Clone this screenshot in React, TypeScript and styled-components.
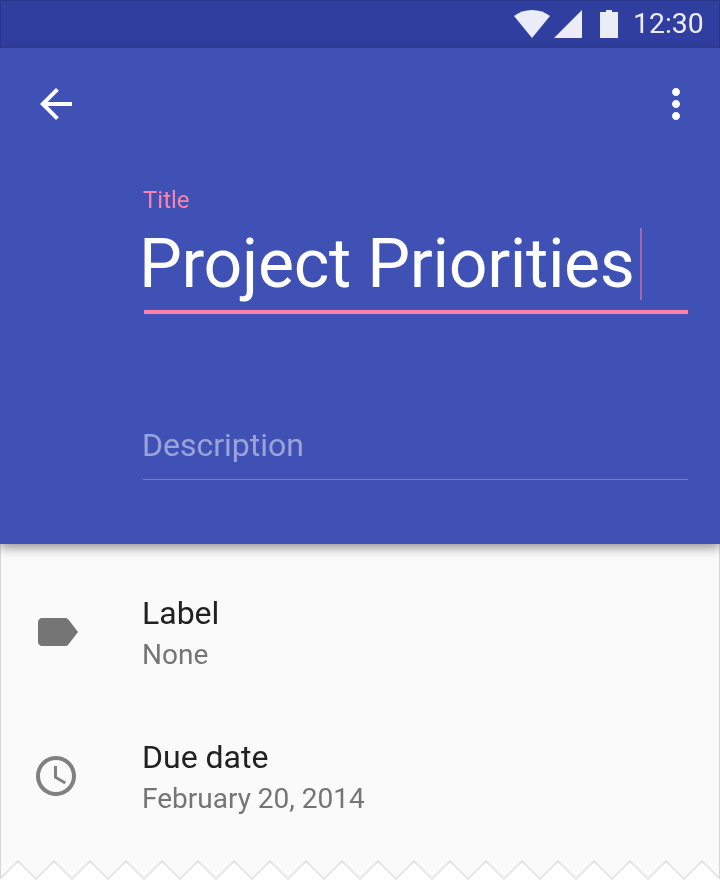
import styled, { createGlobalStyle } from 'styled-components';

const GlobalStyle = createGlobalStyle`
  html, body {
    margin: 0;
    padding: 0;
    background: #ffffff;
    font-family: Roboto, "Liberation Sans", sans-serif;
  }
`;

const Screen = styled.main`
  position: relative;
  width: 720px;
  height: 880px;
  overflow: hidden;
  background: #fafafa;
  display: flex;
  flex-direction: column;
  &::after {
    content: '';
    position: absolute;
    inset: 0;
    border: solid rgba(0, 0, 0, 0.14);
    border-width: 1px 1px 0 1px;
    pointer-events: none;
  }
`;

const StatusBar = styled.div`
  height: 48px;
  flex: none;
  background: #303f9f;
  color: rgba(255, 255, 255, 0.9);
  display: flex;
  align-items: center;
  justify-content: flex-end;
  padding-right: 16px;
`;

const StatusIcons = styled.div`
  display: flex;
  align-items: center;
  margin-right: 15px;
`;

const Clock = styled.span`
  font-size: 28.4px;
  line-height: 48px;
  will-change: transform;
`;

const Header = styled.header`
  position: relative;
  z-index: 1;
  flex: none;
  height: 496px;
  background: #3f51b5;
  box-shadow: 0 4px 10px rgba(0, 0, 0, 0.4);
  display: flex;
  flex-direction: column;
`;

const Toolbar = styled.div`
  height: 112px;
  padding: 0 20px 0 32px;
  display: flex;
  align-items: center;
  justify-content: space-between;
`;

const ToolIcon = styled.svg`
  width: 48px;
  height: 48px;
  fill: #ffffff;
  display: block;
`;

const Fields = styled.div`
  padding: 0 32px 0 143px;
  display: flex;
  flex-direction: column;
`;

const FloatLabel = styled.label`
  font-size: 24px;
  line-height: 32px;
  height: 32px;
  margin-top: 24px;
  color: #ff80ab;
  will-change: transform;
`;

const TitleRow = styled.div`
  height: 78px;
  margin: 9px 0 0 -4px;
  display: flex;
  align-items: center;
  gap: 5px;
`;

const TitleText = styled.span`
  font-size: 68px;
  line-height: 78px;
  letter-spacing: -0.35px;
  color: #ffffff;
  white-space: nowrap;
  will-change: transform;
`;

const Cursor = styled.i`
  display: block;
  width: 2px;
  height: 72px;
  background: #ff80ab;
  opacity: 0.5;
`;

const TitleLine = styled.div`
  height: 4px;
  margin: 7px 0 0 1px;
  background: #ff80ab;
`;

const Description = styled.div`
  margin-top: 111px;
  height: 54px;
  line-height: 40px;
  font-size: 32px;
  text-indent: -1px;
  color: rgba(255, 255, 255, 0.47);
  border-bottom: 1px solid rgba(255, 255, 255, 0.25);
  will-change: transform;
`;

const List = styled.section`
  flex: 1;
  display: flex;
  flex-direction: column;
  padding-top: 16px;
`;

const Row = styled.div`
  height: 144px;
  padding-left: 32px;
  display: flex;
  align-items: center;
  gap: 62px;
`;

const RowIcon = styled.svg<{ $tone?: string }>`
  width: 48px;
  height: 48px;
  flex: none;
  fill: ${(p) => p.$tone ?? '#757575'};
  display: block;
`;

const RowText = styled.div`
  display: flex;
  flex-direction: column;
  padding-top: 4px;
  will-change: transform;
`;

const Primary = styled.span`
  font-size: 32px;
  line-height: 42px;
  color: #212121;
`;

const Secondary = styled.span`
  font-size: 28px;
  line-height: 42px;
  color: #757575;
`;

const TornEdge = styled.svg`
  position: absolute;
  left: 0;
  bottom: 0;
  width: 720px;
  height: 20px;
  display: block;
  z-index: 2;
`;

const zigzag = Array.from({ length: 21 }, (_, i) => `${i * 36},19 ${i * 36 + 18},1`).join(' ');

export default function App() {
  return (
    <>
      <GlobalStyle />
      <Screen>
        <StatusBar>
          <StatusIcons>
            <svg width="36" height="28" viewBox="0 0 36 28" fill="currentColor">
              <path d="M18 28 0 6C5 2 11 0 18 0s13 2 18 6z" />
            </svg>
            <svg width="28" height="28" viewBox="0 0 28 28" fill="currentColor" style={{ marginLeft: 4 }}>
              <path d="M0 28 28 0v28z" />
            </svg>
            <svg width="18" height="28" viewBox="0 0 18 28" fill="currentColor" style={{ marginLeft: 18 }}>
              <path d="M0 2h6V0h6v2h6v26H0z" />
            </svg>
          </StatusIcons>
          <Clock>12:30</Clock>
        </StatusBar>
        <Header>
          <Toolbar>
            <ToolIcon viewBox="0 0 24 24">
              <path d="M20 11H7.83l5.59-5.59L12 4l-8 8 8 8 1.41-1.41L7.83 13H20v-2z" />
            </ToolIcon>
            <ToolIcon viewBox="0 0 24 24">
              <path d="M12 8c1.1 0 2-.9 2-2s-.9-2-2-2-2 .9-2 2 .9 2 2 2zm0 2c-1.1 0-2 .9-2 2s.9 2 2 2 2-.9 2-2-.9-2-2-2zm0 6c-1.1 0-2 .9-2 2s.9 2 2 2 2-.9 2-2-.9-2-2-2z" />
            </ToolIcon>
          </Toolbar>
          <Fields>
            <FloatLabel>Title</FloatLabel>
            <TitleRow>
              <TitleText>Project Priorities</TitleText>
              <Cursor />
            </TitleRow>
            <TitleLine />
            <Description>Description</Description>
          </Fields>
        </Header>
        <List>
          <Row>
            <RowIcon viewBox="0 0 24 24">
              <path d="M18.2 5.8C17.8 5.3 17.2 5 16.6 5L5 5C3.9 5 3 5.9 3 7v10c0 1.1.9 2 2 2h11.6c.6 0 1.2-.3 1.6-.8L23 12z" />
            </RowIcon>
            <RowText>
              <Primary>Label</Primary>
              <Secondary>None</Secondary>
            </RowText>
          </Row>
          <Row>
            <RowIcon viewBox="0 0 24 24" $tone="#808080">
              <path d="M11.99 2C6.47 2 2 6.48 2 12s4.47 10 9.99 10C17.52 22 22 17.52 22 12S17.52 2 11.99 2zM12 20c-4.42 0-8-3.58-8-8s3.58-8 8-8 8 3.58 8 8-3.58 8-8 8z" />
              <path d="M12.5 7H11v6l5.25 3.15.75-1.23-4.5-2.67z" />
            </RowIcon>
            <RowText>
              <Primary>Due date</Primary>
              <Secondary>February 20, 2014</Secondary>
            </RowText>
          </Row>
        </List>
        <TornEdge viewBox="0 0 720 20">
          <polygon points={`0,20 ${zigzag} 720,20`} fill="#ffffff" />
          <polyline points={zigzag} fill="none" stroke="#e0e0e0" strokeWidth="1.5" />
        </TornEdge>
      </Screen>
    </>
  );
}
